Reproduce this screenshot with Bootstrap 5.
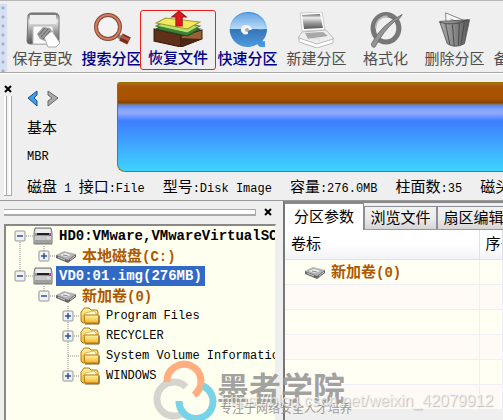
<!DOCTYPE html>
<html lang="zh-CN">
<head>
<meta charset="utf-8">
<meta name="viewport" content="width=device-width, initial-scale=1">
<title>分区工具</title>
<link href="https://cdn.jsdelivr.net/npm/bootstrap@5.3.0/dist/css/bootstrap.min.css" rel="stylesheet">
<style>
body{background:#efefef;color:#000;font:15px/20px "Liberation Sans","Noto Sans CJK SC",sans-serif}
button{padding:0;border:0;background:none;color:inherit}
.mono{font-family:"Liberation Mono","Noto Sans CJK SC",monospace;font-size:12px}
.zh{font-family:"Noto Sans CJK SC",sans-serif;font-size:15px}
.toolbar{height:73px;padding-top:3px;border-bottom:1px solid #a8a8a8;border-top:1px solid #b8b8b8}
.toolgrip{width:8px;background:radial-gradient(circle at 3px 4px,#a5adc0 1px,transparent 2px) 0 0/8px 9px,linear-gradient(90deg,#d5dff3 6px,#efefef 8px)}
.tool{width:69px;flex:none;color:#4e4e4e;border:1px solid transparent;border-radius:3px;padding-top:5px}
.tool svg{width:40px;height:36px;display:block;margin:0 auto}
.tool span{display:block;line-height:22px;margin:0 -2px;white-space:nowrap}
.tool.live{color:#000087;font-weight:500}
.tool.hot{width:76px;margin:6px -3px 2px -6px;padding:0;border-color:#f02018;height:60px}
.tool.hot svg{width:50px;height:36px}
.diskpanel{height:128px;border-top:1px solid #fff;border-bottom:1px solid #999}
.side{width:15px;padding:6px 0 4px 4px}
.closex{width:8px;height:14px;display:block;line-height:0}
.vgrip{width:8px;flex:1;border:solid #aaa;border-width:0 1px 1px 0;background:linear-gradient(90deg,#fff 2px,#aaa 2px,#aaa 3px,#efefef 3px,#fff 6px)}
.diskhead{width:90px;flex:none;gap:10px}
.diskbar{height:90px;border:1px solid #967100;border-right:0;border-radius:3px 0 0 8px;background:linear-gradient(#ab6a24,#a95300 4px,#a95300 16px,#834200 20px,#997500 21px,#567cfb 22px,#80a3f8 26px,#91aafc 30px,#3e7eff 38px,#3fd5ff 89px)}
.info{gap:18px;height:22px;white-space:pre}
.left{width:283px;flex:none;padding:7px 7px 0 4px}
.hgrip{height:7px;border:solid #aaa;border-width:1px 1px 1px 0;background:linear-gradient(#fff 4px,#aaa 4px,#aaa 5px,#fff 5px)}
.tree{border:2px solid #888;border-right:1px solid #eee;border-bottom:0;background:#fffff0}
.node{height:20px;white-space:nowrap}
.node svg{display:block;flex:none}
.l1{padding-left:24px}.l2{padding-left:48px}
.label{margin-left:6px;line-height:20px}
.strong14{font-weight:700;font-size:14px}
.brown{color:#ad5700}
.disk{margin-left:3px;padding:0 3px}
.sel{background:#316ac5;color:#fff}
.right{border-left:2px solid #777;border-top:2px solid #888}
.tabs{height:27px;background:#efefef;border:0}
.tab{height:24px;width:73px;flex:none;border:1px solid #8c8e96;border-bottom-color:#999;background:linear-gradient(#f2f2f2,#eaeaea 55%,#d5d5d5);white-space:nowrap;margin-top:3px}
.tab.on{width:79px;height:27px;margin:0;background:#fff;border-bottom:0;border-left:0}
.grid{table-layout:fixed;margin:0}
.grid th{height:29px;padding:0 6px;font-weight:400;background:linear-gradient(#fff 45%,#f2f3f7);border:solid #dfe1e7;border-width:0 1px 1px 0;white-space:nowrap;overflow:hidden}
.grid td{height:25px;padding:0;background:#fffff4;border:solid #eeeef5;border-width:0 1px 1px 0}
.grid tr:nth-child(even) td{background:#fffaf5}
.grid col:first-child{width:194px}
.logo{position:absolute;left:148px;top:359px;pointer-events:none;width:350px;height:61px}
.logo svg{position:absolute;left:0;top:0}
.brand{position:absolute;left:69px;top:9px;font:700 32px/36px "Noto Sans CJK SC",sans-serif;color:#999;opacity:.9;white-space:nowrap}
.motto{position:absolute;left:72px;top:42px;font:12px/14px "Noto Sans CJK SC",sans-serif;color:#999;white-space:nowrap}
.url{position:absolute;left:73px;top:32px;font:16px/20px "Liberation Sans",sans-serif;color:rgba(245,245,245,.75);text-shadow:1px 1px 1px rgba(130,130,130,.5);white-space:nowrap}
</style>
<script src="https://cdn.jsdelivr.net/npm/bootstrap@5.3.0/dist/js/bootstrap.bundle.min.js"></script>
</head>
<body class="vh-100 overflow-hidden d-flex flex-column position-relative">
<svg width="0" height="0" class="position-absolute">
<defs>
<linearGradient id="metal" x2="0" y2="1"><stop stop-color="#666"/><stop offset=".25" stop-color="#eee"/><stop offset=".6" stop-color="#999"/><stop offset="1" stop-color="#555"/></linearGradient>
<linearGradient id="sky" x2="0" y2="1"><stop stop-color="#3f8cda"/><stop offset=".48" stop-color="#a9d3f8"/><stop offset=".5" stop-color="#3575b8"/><stop offset="1" stop-color="#4e9be0"/></linearGradient>
<linearGradient id="gold" x2="0" y2="1"><stop stop-color="#fff6a8"/><stop offset="1" stop-color="#f2b329"/></linearGradient>
<linearGradient id="bin"><stop stop-color="#aaa"/><stop offset=".5" stop-color="#888"/><stop offset="1" stop-color="#555"/></linearGradient>
<symbol id="close" viewBox="0 0 8 8"><path d="M1 1l6 6M7 1L1 7" stroke="#000" stroke-width="2"/></symbol>
<symbol id="box" viewBox="0 0 12 12"><rect x="1" y="1" width="10" height="10" rx="1" fill="#f2f2f4" stroke="#959595"/><path d="M3 6h6" stroke="#2950a0" stroke-width="1.5"/></symbol>
<symbol id="drive" viewBox="0 0 20 19"><path d="M2 1h16l1 5v11H1V6z" fill="#c9c9c9" stroke="#777"/><path d="M3 2h14l1 4H2z" fill="#eee"/><path d="M2 6h16v3H2z" fill="#999"/><path d="M4 7h12" stroke="#222" stroke-width="2"/><path d="M2 14h16M2 16h16" stroke="#777"/><path d="M14 11h3" stroke="#eee"/><path d="M17 6v3" stroke="#c03cc0" stroke-width="2"/></symbol>
<symbol id="volume" viewBox="0 0 20 14"><path d="M0 6v3l12 5 8-6V5z" fill="#686868"/><path d="M0 6l8-4 12 3-8 6z" fill="#b4b4b4"/><path d="M4 6l5-2 6 2-5 2z" fill="#eee"/><path d="M2 8l7 3M14 11l5-4" stroke="#ccc"/><path d="M7 6l5 1" stroke="#888"/></symbol>
<symbol id="folder" viewBox="0 0 20 18"><path d="M2 4l2-3h5l2 2h6l1 2v11H3L1 14V5z" fill="url(#gold)" stroke="#b47a16"/><path d="M5 6l9-2 2 2v3H5z" fill="#fffbd0" stroke="#d09a32" stroke-width=".6"/><path d="M4 8h15v8H5z" fill="url(#gold)" stroke="#b47a16"/><path d="M5 17h14V9" fill="none" stroke="#765b2b"/></symbol>
</defs>
</svg>

<header class="toolbar d-flex overflow-hidden flex-shrink-0">
<div class="toolgrip flex-shrink-0"></div>
<button class="tool" type="button"><svg viewBox="0 0 40 36"><path d="M5 3Q6 1 8 1h24q3 0 4 3v26q0 2-3 2H7q-3 0-3-3z" fill="url(#metal)" stroke="#777"/><path d="M7 3h26v9H7z" fill="#ededed"/><path d="M10 14h20v18H10z" fill="#f9f9f9" stroke="#bbb"/><path d="M14 22l6-7 7 1 3 5-8 8-5-2z" fill="#999"/><path d="M21 25l8-6 8 12-4 4h-8z" fill="#fff" stroke="#aaa"/><path d="M16 23l6-7m-4 9l7-8m-5 10l7-8" stroke="#666"/></svg><span>保存更改</span></button>
<button class="tool live" type="button"><svg viewBox="0 0 40 36"><path d="M25 23l5 4" stroke="#888" stroke-width="4"/><ellipse cx="16" cy="15" rx="12" ry="12" fill="#f3f3f3" stroke="#7c4b3d" stroke-width="4"/><circle cx="16" cy="15" r="12" fill="none" stroke="#d77b58" stroke-width="2"/><path d="M29 25l8 4" stroke="#792d1e" stroke-width="8"/><path d="M29 24l8 4" stroke="#bd5541" stroke-width="3"/></svg><span>搜索分区</span></button>
<button class="tool live hot" type="button"><svg viewBox="0 0 48 36" preserveAspectRatio="none"><path d="M1 18l26 6v12L1 30z" fill="#603018" stroke="#321b0c"/><path d="M27 25l20-6v9l-20 8z" fill="#996136" stroke="#321b0c"/><path d="M27 36V27l20 1z" fill="#4a2817"/><path d="M3 18l9-5 33 5-12 7z" fill="#398237" stroke="#234c25"/><path d="M3 15l9-5 33 5-12 7z" fill="#b4e36c" stroke="#477d35"/><path d="M3 12l9-5 33 4-12 7z" fill="#f3e95c" stroke="#9f9934"/><path d="M22 15V6h-4l7-6 7 6h-4v9z" fill="#e31618" stroke="#92201d"/></svg><span>恢复文件</span></button>
<button class="tool live" type="button"><svg viewBox="0 0 40 38"><path d="M20 0a19 18.500 0 1 0 10 34q1 3 3 3h5v-6h-3A19 18.500 0 0 0 20 0z" fill="url(#sky)"/><path d="M2 18a18 17 0 0 1 36 0q-5 2-9 0H20z" fill="#fff" opacity=".18"/><path d="M19 14a5 5 0 1 0 1 9v-4h4a5 5 0 0 0-5-5z" fill="#f5f5f5"/><circle cx="19" cy="19" r="2" fill="#aaa"/></svg><span>快速分区</span></button>
<button class="tool" type="button"><svg viewBox="3 0 40 36"><path d="M6 1l22-1 3 18-23 1z" fill="#fff" stroke="#ccc"/><path d="M8 3l18-1 3 14-19 1z" fill="url(#metal)"/><path d="M8 20l24-2 8 9-16 7-20-8z" fill="#eee" stroke="#bbb"/><path d="M11 21l18-1 5 4-20 3z" fill="#a8a8a8"/><path d="M5 26l18 6 16-5v4l-16 5-18-6z" fill="#fff" stroke="#bbb"/><path d="M15 27l9-1 2 3" stroke="#ddd" fill="none"/></svg><span>新建分区</span></button>
<button class="tool" type="button"><svg viewBox="0 0 40 42"><ellipse cx="20" cy="19" rx="15" ry="16" fill="none" stroke="#777" stroke-width="6"/><path d="M8 19A13 14 0 0 1 22 5" fill="none" stroke="#bbb" stroke-width="2"/><path d="M3 37Q15 14 39 3q-3 6-9 8Q17 22 7 41q-4 1-4-4z" fill="#949494" stroke="#696969"/></svg><span>格式化</span></button>
<button class="tool" type="button"><svg viewBox="0 0 40 42"><path d="M9 1l22 9 3 8H10z" fill="#f8f8f8" stroke="#777"/><path d="M14 8l12 4M14 11l14 4" stroke="#999"/><path d="M2 11l35-2-6 28q-11 6-20 0z" fill="url(#bin)" stroke="#555"/><path d="M2 12q18 5 33-3M9 14l5 24M17 15l2 25M25 13l-1 26M31 12l-4 26" fill="none" stroke="#444"/></svg><span>删除分区</span></button>
<button class="tool" type="button"><svg viewBox="0 0 40 36"></svg><span>备份分区</span></button>
</header>

<section class="diskpanel d-flex flex-shrink-0 overflow-hidden">
<div class="side d-flex flex-column flex-shrink-0 pt-2"><button class="closex" type="button" aria-label="关闭磁盘栏"><svg width="8" height="8"><use href="#close"/></svg></button><div class="vgrip"></div></div>
<div class="flex-grow-1 overflow-hidden ps-2 pt-2 ms-1">
<div class="d-flex">
<div class="diskhead d-flex flex-column pt-1">
<div class="d-flex gap-2 lh-1 mt-1"><button type="button" aria-label="上一个磁盘" class="d-flex"><svg width="12" height="17"><path d="M10 1L1 8l9 8V11L7 8l3-3z" fill="#3e9fea" stroke="#174a8f"/></svg></button><button type="button" aria-label="下一个磁盘" class="d-flex"><svg width="12" height="17"><path d="M1 1l10 7-10 8v-5l4-3-4-3z" fill="#aaa" stroke="#666"/></svg></button></div>
<div class="zh">基本</div><div class="mono">MBR</div>
</div>
<div class="diskbar flex-grow-1"></div>
</div>
<div class="info mono d-flex align-items-center mt-1"><div><span class="zh">磁盘</span> 1 <span class="zh">接口</span>:File</div><div><span class="zh">型号</span>:Disk Image</div><div><span class="zh">容量</span>:276.0MB</div><div><span class="zh">柱面数</span>:35</div><div><span class="zh">磁头数</span>:255</div></div>
</div>
</section>

<main class="d-flex flex-grow-1 overflow-hidden">
<aside class="left d-flex flex-column">
<div class="d-flex align-items-center mb-2"><div class="hgrip flex-grow-1"></div><button class="d-flex ms-2 me-1" type="button" aria-label="关闭目录"><svg width="8" height="8"><use href="#close"/></svg></button></div>
<div class="tree mono flex-grow-1 overflow-hidden ps-1">
<div class="node d-flex align-items-center"><svg width="23" height="20"><path d="M10 10v10M10 10h14" stroke="#888" stroke-dasharray="1 1"/><use href="#box" x="4" y="4" width="12" height="12"/></svg><svg width="20" height="19"><use href="#drive"/></svg><span class="label disk strong14">HD0:VMware,VMwareVirtualSCSI</span></div>
<div class="node d-flex align-items-center"><svg width="46" height="20"><path d="M10 0v20M34 0v10M34 10h14" stroke="#888" stroke-dasharray="1 1"/><use href="#box" x="28" y="4" width="12" height="12"/><path d="M34 7v6" stroke="#2950a0" stroke-width="1.500"/></svg><svg width="20" height="14"><use href="#volume"/></svg><span class="label strong14 brown"><span class="zh">本地磁盘</span>(C:)</span></div>
<div class="node d-flex align-items-center"><svg width="23" height="20"><path d="M10 0v10M10 10h14" stroke="#888" stroke-dasharray="1 1"/><use href="#box" x="4" y="4" width="12" height="12"/></svg><svg width="20" height="19"><use href="#drive"/></svg><span class="label disk sel strong14">VD0:01.img(276MB)</span></div>
<div class="node l1 d-flex align-items-center"><svg width="22" height="20"><path d="M10 0v10M10 10h14" stroke="#888" stroke-dasharray="1 1"/><use href="#box" x="4" y="4" width="12" height="12"/></svg><svg width="20" height="14"><use href="#volume"/></svg><span class="label strong14 brown"><span class="zh">新加卷</span>(0)</span></div>
<div class="node l2 d-flex align-items-center"><svg width="22" height="20"><path d="M10 0v20M10 10h14" stroke="#888" stroke-dasharray="1 1"/><use href="#box" x="4" y="4" width="12" height="12"/><path d="M10 7v6" stroke="#2950a0" stroke-width="1.500"/></svg><svg width="20" height="18"><use href="#folder"/></svg><span class="label">Program Files</span></div>
<div class="node l2 d-flex align-items-center"><svg width="22" height="20"><path d="M10 0v20M10 10h14" stroke="#888" stroke-dasharray="1 1"/><use href="#box" x="4" y="4" width="12" height="12"/><path d="M10 7v6" stroke="#2950a0" stroke-width="1.500"/></svg><svg width="20" height="18"><use href="#folder"/></svg><span class="label">RECYCLER</span></div>
<div class="node l2 d-flex align-items-center"><svg width="22" height="20"><path d="M10 0v20M10 10h14" stroke="#888" stroke-dasharray="1 1"/></svg><svg width="20" height="18"><use href="#folder"/></svg><span class="label">System Volume Information</span></div>
<div class="node l2 d-flex align-items-center"><svg width="22" height="20"><path d="M10 0v10M10 10h14" stroke="#888" stroke-dasharray="1 1"/><use href="#box" x="4" y="4" width="12" height="12"/><path d="M10 7v6" stroke="#2950a0" stroke-width="1.500"/></svg><svg width="20" height="18"><use href="#folder"/></svg><span class="label">WINDOWS</span></div>
</div>
</aside>
<section class="right flex-grow-1 overflow-hidden">
<div class="tabs d-flex" role="tablist"><button class="tab on" type="button" role="tab" aria-selected="true">分区参数</button><button class="tab" type="button" role="tab">浏览文件</button><button class="tab" type="button" role="tab">扇区编辑</button></div>
<table class="grid w-100"><colgroup><col><col></colgroup>
<thead><tr><th>卷标</th><th>序号</th></tr></thead>
<tbody><tr><td><div class="d-flex align-items-center ps-3 ms-1 mono"><svg width="20" height="14"><use href="#volume"/></svg><span class="label strong14 brown"><span class="zh">新加卷</span>(0)</span></div></td><td></td></tr>
<tr><td></td><td></td></tr><tr><td></td><td></td></tr><tr><td></td><td></td></tr><tr><td></td><td></td></tr><tr><td></td><td></td></tr></tbody></table>
</section>
</main>

<div class="logo">
<svg width="70" height="61" fill="none" stroke-width="7"><path d="M38 28A17 17 0 1 0 34 55" stroke="#d5d5d0"/><path d="M19 23A17 17 0 1 1 46 36" stroke="#ffae80"/><path d="M55 27A17 17 0 1 1 31 42" stroke="#79d3e6"/></svg>
<div class="brand">墨者学院</div><div class="motto">专注于网络安全人才培养</div><div class="url">https://blog.csdn.net/weixin_42079912</div>
</div>
</body>
</html>
